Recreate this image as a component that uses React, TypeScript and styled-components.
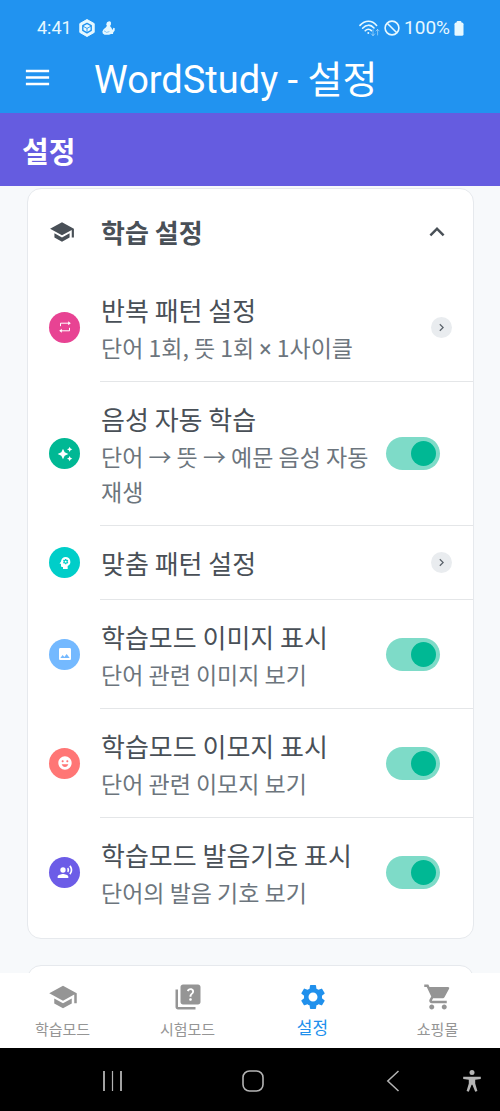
import React from "react";
import styled, { createGlobalStyle } from "styled-components";
import {
  MdAutoAwesome,
  MdChevronRight,
  MdEmojiEmotions,
  MdExpandLess,
  MdImage,
  MdMenu,
  MdPsychology,
  MdQuiz,
  MdRecordVoiceOver,
  MdSchool,
  MdSettings,
  MdShoppingCart,
} from "react-icons/md";

const GlobalStyle = createGlobalStyle`
  * { box-sizing: border-box; }
  body {
    margin: 0;
    font-family: "Noto Sans CJK KR", Roboto, sans-serif;
    background: #f7f9fb;
  }
  button, input {
    font: inherit;
    color: inherit;
    margin: 0;
  }
  button {
    border: 0;
    padding: 0;
    background: none;
    text-align: left;
    cursor: pointer;
  }
  svg { display: block; flex: none; }
`;

const Screen = styled.div`
  display: flex;
  flex-direction: column;
  height: 100vh;
`;

const StatusBar = styled.div`
  display: flex;
  flex: none;
  justify-content: space-between;
  align-items: center;
  padding: 16px 36px 0 37px;
  height: 40px;
  background: #2193f0;
  color: #e6f8ff;
  font-family: Roboto, sans-serif;
  line-height: 24px;
`;

const StatusGroup = styled.div<{ $gap: number; $size: number }>`
  display: flex;
  align-items: center;
  gap: ${(p) => p.$gap}px;
  font-size: ${(p) => p.$size}px;
`;

const AppBar = styled.header`
  display: flex;
  flex: none;
  align-items: center;
  gap: 41px;
  height: 73px;
  padding: 6px 22px 0;
  background: #2193f0;
  color: #fff;
`;

const AppTitle = styled.h1`
  margin: 0;
  font-family: Roboto, "Noto Sans CJK KR", sans-serif;
  font-size: 38px;
  font-weight: 400;
  line-height: 48px;
`;

const MenuButton = styled.button`
  margin-top: -4px;
`;

const PageHeader = styled.div`
  flex: none;
  padding: 16px 22px 15px;
  background: #655ce0;
  color: #fff;
`;

const PageTitle = styled.h2`
  margin: 0;
  font-size: 29px;
  font-weight: 700;
  line-height: 42px;
`;

const Content = styled.main`
  flex: 1;
  min-height: 0;
  overflow-y: auto;
  scrollbar-width: none;
  display: flex;
  flex-direction: column;
  gap: 26px;
  padding: 2px 26px 0 27px;
  background: #f7f9fb;
`;

const Card = styled.section`
  flex: none;
  min-height: 90px;
  border: 1px solid #e6e9ed;
  border-radius: 14px;
  background: #fff;
  overflow: hidden;
  padding-bottom: 12px;
`;

const SectionHeader = styled.button`
  display: flex;
  align-items: center;
  width: 100%;
  padding: 23px 21px 21px;
  color: #495057;
`;

const IconSlot = styled.span`
  flex: none;
  width: 52px;
`;

const SectionTitle = styled.span`
  flex: 1;
  font-size: 26px;
  font-weight: 700;
  line-height: 40px;
`;

const List = styled.ul`
  list-style: none;
  margin: 0;
  padding: 0;
`;

const Item = styled.li`
  display: flex;
  flex-direction: column;
  &:not(:last-child)::after {
    content: "";
    height: 1px;
    margin-left: 72px;
    background: #e4e6e8;
  }
`;

const RowLabel = styled.label`
  display: flex;
  align-items: center;
  padding: 16px 33px 16px 21px;
  cursor: pointer;
`;

const RowButton = styled.button`
  display: flex;
  align-items: center;
  padding: 16px 21px;
`;

const Badge = styled.span<{ $color: string }>`
  display: flex;
  align-items: center;
  justify-content: center;
  width: 31px;
  height: 31px;
  border-radius: 50%;
  background: ${(p) => p.$color};
  color: #fff;
`;

const Texts = styled.span`
  flex: 1;
  display: flex;
  flex-direction: column;
  word-break: keep-all;
`;

const RowTitle = styled.span`
  font-size: 26px;
  line-height: 41px;
  color: #495057;
`;

const RowDescription = styled.span`
  font-size: 23px;
  line-height: 35px;
  color: #6c757d;
`;

const Sign = styled.span`
  font-family: Roboto, sans-serif;
  line-height: 1;
`;

const Switch = styled.input`
  appearance: none;
  flex: none;
  display: flex;
  align-items: center;
  width: 54px;
  height: 33px;
  margin-left: 12px;
  padding: 0 4px;
  border-radius: 17px;
  background: #d5d9dd;
  cursor: pointer;
  &::before {
    content: "";
    width: 25px;
    height: 25px;
    border-radius: 50%;
    background: #fff;
  }
  &:checked {
    justify-content: flex-end;
    background: #7edbc8;
  }
  &:checked::before {
    background: #00b894;
  }
`;

const Chevron = styled.span`
  display: flex;
  align-items: center;
  justify-content: center;
  width: 21px;
  height: 21px;
  border-radius: 50%;
  background: #e9ecef;
  color: #5c646c;
`;

const TabBar = styled.nav`
  flex: none;
  display: grid;
  grid-template-columns: repeat(4, 1fr);
  height: 75px;
  background: #fff;
`;

const Tab = styled.button<{ $active?: boolean }>`
  display: flex;
  flex-direction: column;
  align-items: center;
  gap: ${(p) => (p.$active ? 3 : 5)}px;
  padding-top: 9px;
  font-size: ${(p) => (p.$active ? 17 : 15)}px;
  line-height: 24px;
  color: ${(p) => (p.$active ? "#2090ec" : "#959595")};
`;

const SystemBar = styled.div`
  flex: none;
  display: flex;
  align-items: center;
  justify-content: space-between;
  height: 63px;
  padding: 3px 18px 0 101px;
  background: #000;
  color: #b4b4b4;
`;

const BackGroup = styled.div`
  display: flex;
  align-items: center;
  gap: 62px;
`;

type Setting = {
  title: string;
  description?: React.ReactNode;
  color: string;
  icon: React.ReactNode;
  toggle?: boolean;
};

const settings: Setting[] = [
  { title: "반복 패턴 설정", description: <>단어 1회, 뜻 1회 <Sign>×</Sign> 1사이클</>, color: "#e84393", icon: <RepeatIcon /> },
  { title: "음성 자동 학습", description: "단어 → 뜻 → 예문 음성 자동 재생", color: "#00b894", icon: <MdAutoAwesome size={16} />, toggle: true },
  { title: "맞춤 패턴 설정", color: "#00cec9", icon: <MdPsychology size={16} /> },
  { title: "학습모드 이미지 표시", description: "단어 관련 이미지 보기", color: "#74b9ff", icon: <MdImage size={16} />, toggle: true },
  { title: "학습모드 이모지 표시", description: "단어 관련 이모지 보기", color: "#ff7675", icon: <MdEmojiEmotions size={16} />, toggle: true },
  { title: "학습모드 발음기호 표시", description: "단어의 발음 기호 보기", color: "#6c5ce7", icon: <MdRecordVoiceOver size={16} />, toggle: true },
];

function RepeatIcon() {
  return (
    <svg width="14" height="14" viewBox="0 0 14 14">
      <path d="M2.5 6.2V3.2H11M11.5 7.8V10.8H3" fill="none" stroke="currentColor" strokeWidth="1" />
      <path d="M10.2 1.2 12.8 3.2 10.2 5.2ZM3.8 8.8 1.2 10.8 3.8 12.8Z" fill="currentColor" />
    </svg>
  );
}

function CubeIcon() {
  return (
    <svg width="18" height="18" viewBox="0 0 18 18">
      <path d="M9 0.5 16.2 4.6V13.4L9 17.5 1.8 13.4V4.6Z" fill="currentColor" stroke="currentColor" strokeLinejoin="round" />
      <path d="M9 4.4 13.2 6.6V11.4L9 13.8 4.8 11.4V6.6Z" fill="none" stroke="#2193f0" strokeWidth="1.4" strokeLinejoin="round" />
      <path d="M5 7.2 9 9.4 13 7.2M9 9.4V13" fill="none" stroke="#2193f0" strokeWidth="0.9" />
    </svg>
  );
}

function CharacterIcon() {
  return (
    <svg width="13" height="14" viewBox="0 0 13 14" fill="currentColor">
      <path d="M5 1.2 6.4 0.4 8 0.2 9 1.4 8.9 3.8 8 5 9.6 7 10.2 8.8 11 8.2 11.2 6.8 12.8 7.2 12.6 9.8 11.2 11.4 11 13H9L7 13.8H2.6L0.8 12.6 0.4 10.4 1.6 8.2 4 6.2 4.9 4.8 4.2 3.6Z" />
      <path d="M2 9.8 4.6 11.4 7.4 10.6" fill="none" stroke="#2193f0" strokeWidth="0.5" />
    </svg>
  );
}

function WifiIcon() {
  return (
    <svg width="21" height="17" viewBox="0 0 21 17" fill="none" stroke="currentColor" strokeWidth="1.6" strokeLinecap="round">
      <path d="M1 5.4C6-0.2 13-0.2 17.6 5.4" />
      <path d="M3.6 8.2C7.4 4.2 11.6 4.2 15 8" />
      <path d="M6.2 10.8C8.2 8.8 10.6 8.8 12.4 10.6" />
      <circle cx="9.3" cy="13" r="1" fill="currentColor" stroke="none" />
      <path d="M14 9.6V15.6M12.2 13.8 14 15.6 15.8 13.8M18.6 15V9.6M17 11 18.6 9.4 20.2 11" strokeWidth="1" opacity="0.5" />
    </svg>
  );
}

function BlockedIcon() {
  return (
    <svg width="16" height="16" viewBox="0 0 16 16" fill="none" stroke="currentColor" strokeWidth="1.6">
      <circle cx="8" cy="8" r="6.9" />
      <path d="M3.2 3.2 12.8 12.8" />
    </svg>
  );
}

function BatteryIcon() {
  return (
    <svg width="10" height="15" viewBox="0 0 10 15" fill="currentColor">
      <rect x="2.6" y="0" width="4.8" height="4" rx="1" />
      <rect x="0.5" y="1.6" width="9" height="13.2" rx="1.6" />
    </svg>
  );
}

function RecentsIcon() {
  return (
    <svg width="23" height="22" viewBox="0 0 23 22" stroke="currentColor">
      <path d="M3 1V21M20 1V21" strokeWidth="1.8" />
      <path d="M11.5 1V21" strokeWidth="1.2" />
    </svg>
  );
}

function HomeIcon() {
  return (
    <svg width="22" height="22" viewBox="0 0 22 22" fill="none" stroke="currentColor" strokeWidth="1.6">
      <rect x="1" y="1" width="20" height="20" rx="6.5" />
    </svg>
  );
}

function BackIcon() {
  return (
    <svg width="19" height="22" viewBox="-5 0 19 22" fill="none" stroke="currentColor" strokeWidth="1.5">
      <path d="M12.5 1 1.8 11 12.5 21" />
    </svg>
  );
}

function AccessibilityIcon() {
  return (
    <svg width="20" height="22" viewBox="0 0 20 22" fill="currentColor">
      <circle cx="10" cy="2.6" r="2.5" />
      <path d="M1.2 6.8H18.8V9L13.2 9.8V13.4L15.4 21 13.2 21.8 10.4 14.8H9.6L6.8 21.8 4.6 21 6.8 13.4V9.8L1.2 9Z" />
    </svg>
  );
}

function SettingRow({ title, description, color, icon, toggle }: Setting) {
  const body = (
    <>
      <IconSlot>
        <Badge $color={color}>{icon}</Badge>
      </IconSlot>
      <Texts>
        <RowTitle>{title}</RowTitle>
        {description && <RowDescription>{description}</RowDescription>}
      </Texts>
    </>
  );
  return (
    <Item>
      {toggle ? (
        <RowLabel>
          {body}
          <Switch type="checkbox" role="switch" defaultChecked />
        </RowLabel>
      ) : (
        <RowButton type="button">
          {body}
          <Chevron>
            <MdChevronRight size={15} />
          </Chevron>
        </RowButton>
      )}
    </Item>
  );
}

export default function App() {
  return (
    <Screen>
      <GlobalStyle />
      <StatusBar>
        <StatusGroup $gap={6} $size={18}>
          <span>4:41</span>
          <CubeIcon />
          <CharacterIcon />
        </StatusGroup>
        <StatusGroup $gap={4} $size={19}>
          <WifiIcon />
          <BlockedIcon />
          <span>100%</span>
          <BatteryIcon />
        </StatusGroup>
      </StatusBar>
      <AppBar>
        <MenuButton type="button" aria-label="메뉴">
          <MdMenu size={31} />
        </MenuButton>
        <AppTitle>WordStudy - 설정</AppTitle>
      </AppBar>
      <PageHeader>
        <PageTitle>설정</PageTitle>
      </PageHeader>
      <Content>
        <Card>
          <SectionHeader type="button" aria-expanded="true">
            <IconSlot>
              <MdSchool size={26} />
            </IconSlot>
            <SectionTitle>학습 설정</SectionTitle>
            <MdExpandLess size={30} />
          </SectionHeader>
          <List>
            {settings.map((s) => (
              <SettingRow key={s.title} {...s} />
            ))}
          </List>
        </Card>
        <Card />
      </Content>
      <TabBar>
        <Tab type="button">
          <MdSchool size={30} />
          학습모드
        </Tab>
        <Tab type="button">
          <MdQuiz size={30} />
          시험모드
        </Tab>
        <Tab type="button" $active aria-current="page">
          <MdSettings size={30} />
          설정
        </Tab>
        <Tab type="button">
          <MdShoppingCart size={30} />
          쇼핑몰
        </Tab>
      </TabBar>
      <SystemBar>
        <RecentsIcon />
        <HomeIcon />
        <BackGroup>
          <BackIcon />
          <AccessibilityIcon />
        </BackGroup>
      </SystemBar>
    </Screen>
  );
}
